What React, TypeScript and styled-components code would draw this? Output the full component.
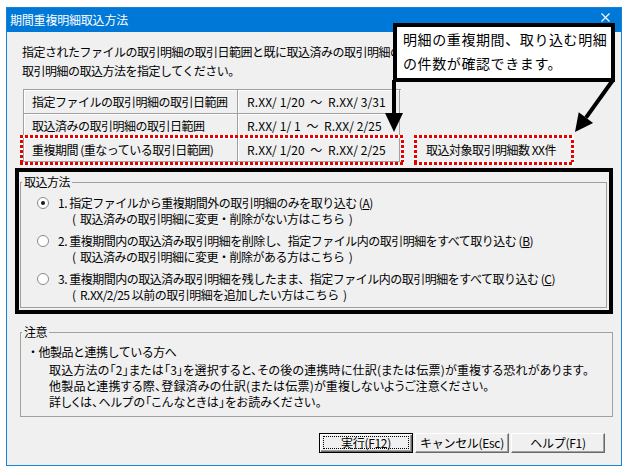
import React from 'react';
import styled, { createGlobalStyle, css } from 'styled-components';

const GlobalStyle = createGlobalStyle`
  html, body {
    margin: 0;
    padding: 0;
    background: #ffffff;
  }
  body {
    font-family: "Noto Sans CJK JP", "Liberation Sans", sans-serif;
    font-size: 12px;
    color: #000;
  }
`;

// red dotted frame used for the highlight marks
const redDots = css`
  background:
    repeating-linear-gradient(90deg, #e60000 0 3px, #ffffff 3px 5px) top left / 100% 3px no-repeat,
    repeating-linear-gradient(90deg, #e60000 0 3px, #ffffff 3px 5px) bottom left / 100% 3px no-repeat,
    repeating-linear-gradient(180deg, #e60000 0 3px, #ffffff 3px 5px) top left / 3px 100% no-repeat,
    repeating-linear-gradient(180deg, #e60000 0 3px, #ffffff 3px 5px) top right / 3px 100% no-repeat;
`;

const Window = styled.div`
    position: relative;
    box-sizing: border-box;
    margin: 7px 0 0 6px;
    width: 616px;
    height: 459px;
    border: 1px solid #1883d7;
    background: #f0f0f0;
    display: flex;
    flex-direction: column;
`;

const TitleBar = styled.div`
    height: 24px;
    background: #0078d7;
    display: flex;
    align-items: center;
`;

const TitleText = styled.span`
    padding-left: 3px;
    color: #fff;
    font-size: 12px;
    letter-spacing: -0.2px;
    line-height: 24px;
`;

const CloseIcon = styled.svg`
    align-self: flex-start;
    margin: 5px 11px 0 auto;
`;

const Body = styled.div`
    padding: 10px 8px 0 8px;
    display: flex;
    flex-direction: column;
    letter-spacing: -0.5px;
`;

const Description = styled.div`
    margin-left: 7px;
    line-height: 19px;
    white-space: nowrap;
`;

const TopRow = styled.div`
    display: flex;
    align-items: flex-end;
    margin-top: 9px;
`;

const Table = styled.div`
    margin: 0 0 3px 8px;
    width: 377px;
    border-top: 1px solid #a0a0a0;
    border-left: 1px solid #a0a0a0;
`;

const Row = styled.div<{ $marked?: boolean }>`
    position: relative;
    display: flex;
    height: 24px;
    ${(p) => p.$marked && css`
      &::after {
        content: '';
        position: absolute;
        left: -4px;
        right: -3px;
        top: -3px;
        bottom: -3px;
        ${redDots}
      }
    `}
`;

const Cell = styled.div<{ $w: number; $pad: number; $date?: boolean }>`
    box-sizing: border-box;
    width: ${(p) => p.$w}px;
    padding-left: ${(p) => p.$pad}px;
    border-right: 1px solid #a0a0a0;
    border-bottom: 1px solid #a0a0a0;
    box-shadow: inset 1px 1px 0 #fff;
    line-height: 23px;
    white-space: pre;
    letter-spacing: ${(p) => (p.$date ? '0.1px' : '-0.5px')};
`;

const CountBox = styled.div`
    box-sizing: border-box;
    margin-left: 13px;
    width: 160px;
    height: 30px;
    padding-left: 12px;
    line-height: 30px;
    white-space: nowrap;
    ${redDots}
`;

const MethodFrame = styled.div`
    margin-top: 3px;
    border: 4px solid #000;
`;

const GroupBox = styled.fieldset<{ $inFrame?: boolean }>`
    margin: ${(p) => (p.$inFrame ? '2px 2px 2px 1px' : '10px 0 0 5px')};
    padding: ${(p) => (p.$inFrame ? '0 0 4px 0' : '4px 0 6px 0')};
    border: 1px solid #a0a0a0;
    min-inline-size: 0;
`;

const GroupLabel = styled.legend`
    margin-left: 1px;
    padding: 0 2px;
    line-height: 16px;
`;

const Options = styled.div`
    padding: 5px 0 0 16px;
    display: flex;
    flex-direction: column;
    gap: 6px;
`;

const Option = styled.div`
    display: flex;
    align-items: flex-start;
`;

const Radio = styled.span<{ $checked?: boolean }>`
    flex: none;
    box-sizing: border-box;
    margin-top: 2px;
    width: 12px;
    height: 12px;
    border-radius: 50%;
    border: 1px solid #8a8a8a;
    background: #fff;
    display: flex;
    align-items: center;
    justify-content: center;
    &::after {
        content: '';
        width: 4px;
        height: 4px;
        border-radius: 50%;
        background: ${(p) => (p.$checked ? '#1a1a1a' : 'transparent')};
    }
`;

const OptionText = styled.div`
    margin-left: 9px;
    line-height: 16px;
    white-space: pre;
`;

const SubLine = styled.div`
    padding-left: 14px;
`;

const Key = styled.span`
    text-decoration: underline;
`;

const NoteHead = styled.div`
    padding-left: 6px;
    line-height: 16px;
`;

const NoteBody = styled.div`
    margin-top: 2px;
    padding-left: 28px;
    line-height: 16px;
    white-space: nowrap;
    font-feature-settings: "palt";
    letter-spacing: 0.2px;
`;

const ButtonRow = styled.div`
    display: flex;
    justify-content: flex-end;
    gap: 2px;
    margin: 16px 8px 0 0;
`;

const Button = styled.div<{ $default?: boolean }>`
    position: relative;
    box-sizing: border-box;
    width: 94px;
    height: 20px;
    background: #f0f0f0;
    border: 1px solid ${(p) => (p.$default ? '#000' : '#fff')};
    border-right-color: ${(p) => (p.$default ? '#000' : '#696969')};
    border-bottom-color: ${(p) => (p.$default ? '#000' : '#696969')};
    box-shadow: ${(p) =>
      p.$default
        ? 'inset 1px 1px 0 #fff, inset -1px -1px 0 #696969, inset -2px -2px 0 #a0a0a0'
        : 'inset -1px -1px 0 #a0a0a0'};
    text-align: center;
    line-height: 18px;
    letter-spacing: -0.3px;
    ${(p) => p.$default && css`
      &::after {
        content: '';
        position: absolute;
        inset: 2px 3px 3px 3px;
        border: 1px dotted #000;
      }
    `}
`;

const Callout = styled.div`
    position: absolute;
    left: 386px;
    top: 15px;
    box-sizing: border-box;
    width: 222px;
    height: 59px;
    border: 4px solid #000;
    background: #fff;
    padding-left: 6px;
    font-size: 14px;
    letter-spacing: 0.6px;
    line-height: 24px;
    white-space: nowrap;
`;

const Arrows = styled.svg`
    position: absolute;
    left: 370px;
    top: 70px;
    pointer-events: none;
`;

export default function App() {
    return (
        <>
            <GlobalStyle />
            <Window>
                <TitleBar>
                    <TitleText>期間重複明細取込方法</TitleText>
                    <CloseIcon width="9" height="9" viewBox="0 0 9 9">
                        <path d="M0.5 0.5 L8.5 8.5 M8.5 0.5 L0.5 8.5" stroke="#fff" strokeWidth="1.1" fill="none" />
                    </CloseIcon>
                </TitleBar>
                <Body>
                    <Description>
                        <div>指定されたファイルの取引明細の取引日範囲と既に取込済みの取引明細の</div>
                        <div>取引明細の取込方法を指定してください。</div>
                    </Description>
                    <TopRow>
                        <Table>
                            <Row>
                                <Cell $w={214} $pad={8}>指定ファイルの取引明細の取引日範囲</Cell>
                                <Cell $w={162} $pad={9} $date>{'R.XX/ 1/20  ～  R.XX/ 3/31'}</Cell>
                            </Row>
                            <Row>
                                <Cell $w={214} $pad={8}>取込済みの取引明細の取引日範囲</Cell>
                                <Cell $w={162} $pad={9} $date>{'R.XX/ 1/ 1  ～  R.XX/ 2/25'}</Cell>
                            </Row>
                            <Row $marked>
                                <Cell $w={214} $pad={8}>重複期間 (重なっている取引日範囲)</Cell>
                                <Cell $w={162} $pad={9} $date>{'R.XX/ 1/20  ～  R.XX/ 2/25'}</Cell>
                            </Row>
                        </Table>
                        <CountBox>取込対象取引明細数 XX件</CountBox>
                    </TopRow>
                    <MethodFrame>
                        <GroupBox $inFrame>
                            <GroupLabel>取込方法</GroupLabel>
                            <Options>
                                <Option>
                                    <Radio $checked />
                                    <OptionText>
                                        <div>1. 指定ファイルから重複期間外の取引明細のみを取り込む (<Key>A</Key>)</div>
                                        <SubLine>{'(  取込済みの取引明細に変更・削除がない方はこちら  )'}</SubLine>
                                    </OptionText>
                                </Option>
                                <Option>
                                    <Radio />
                                    <OptionText>
                                        <div>2. 重複期間内の取込済み取引明細を削除し、指定ファイル内の取引明細をすべて取り込む (<Key>B</Key>)</div>
                                        <SubLine>{'(  取込済みの取引明細に変更・削除がある方はこちら  )'}</SubLine>
                                    </OptionText>
                                </Option>
                                <Option>
                                    <Radio />
                                    <OptionText>
                                        <div>3. 重複期間内の取込済み取引明細を残したまま、指定ファイル内の取引明細をすべて取り込む (<Key>C</Key>)</div>
                                        <SubLine>{'(  R.XX/2/25 以前の取引明細を追加したい方はこちら  )'}</SubLine>
                                    </OptionText>
                                </Option>
                            </Options>
                        </GroupBox>
                    </MethodFrame>
                    <GroupBox>
                        <GroupLabel>注意</GroupLabel>
                        <NoteHead>・他製品と連携している方へ</NoteHead>
                        <NoteBody>
                            <div>取込方法の「2」または「3」を選択すると、その後の連携時に仕訳(または伝票)が重複する恐れがあります。</div>
                            <div>他製品と連携する際、登録済みの仕訳(または伝票)が重複しないようご注意ください。</div>
                            <div>詳しくは、ヘルプの「こんなときは」をお読みください。</div>
                        </NoteBody>
                    </GroupBox>
                    <ButtonRow>
                        <Button $default>実行(F12)</Button>
                        <Button>キャンセル(Esc)</Button>
                        <Button>ヘルプ(F1)</Button>
                    </ButtonRow>
                </Body>
                <Callout>
                    <div>明細の重複期間、取り込む明細</div>
                    <div>の件数が確認できます。</div>
                </Callout>
                <Arrows width="250" height="70" viewBox="0 0 250 70">
                    <line x1="17" y1="2" x2="17" y2="38" stroke="#000" strokeWidth="4" />
                    <polygon points="8,35 26,35 17,54" fill="#000" />
                    <line x1="236" y1="2" x2="209" y2="39.7" stroke="#000" strokeWidth="4" />
                    <polygon points="198,54 216.1,45.1 201.7,34.3" fill="#000" />
                </Arrows>
            </Window>
        </>
    );
}
